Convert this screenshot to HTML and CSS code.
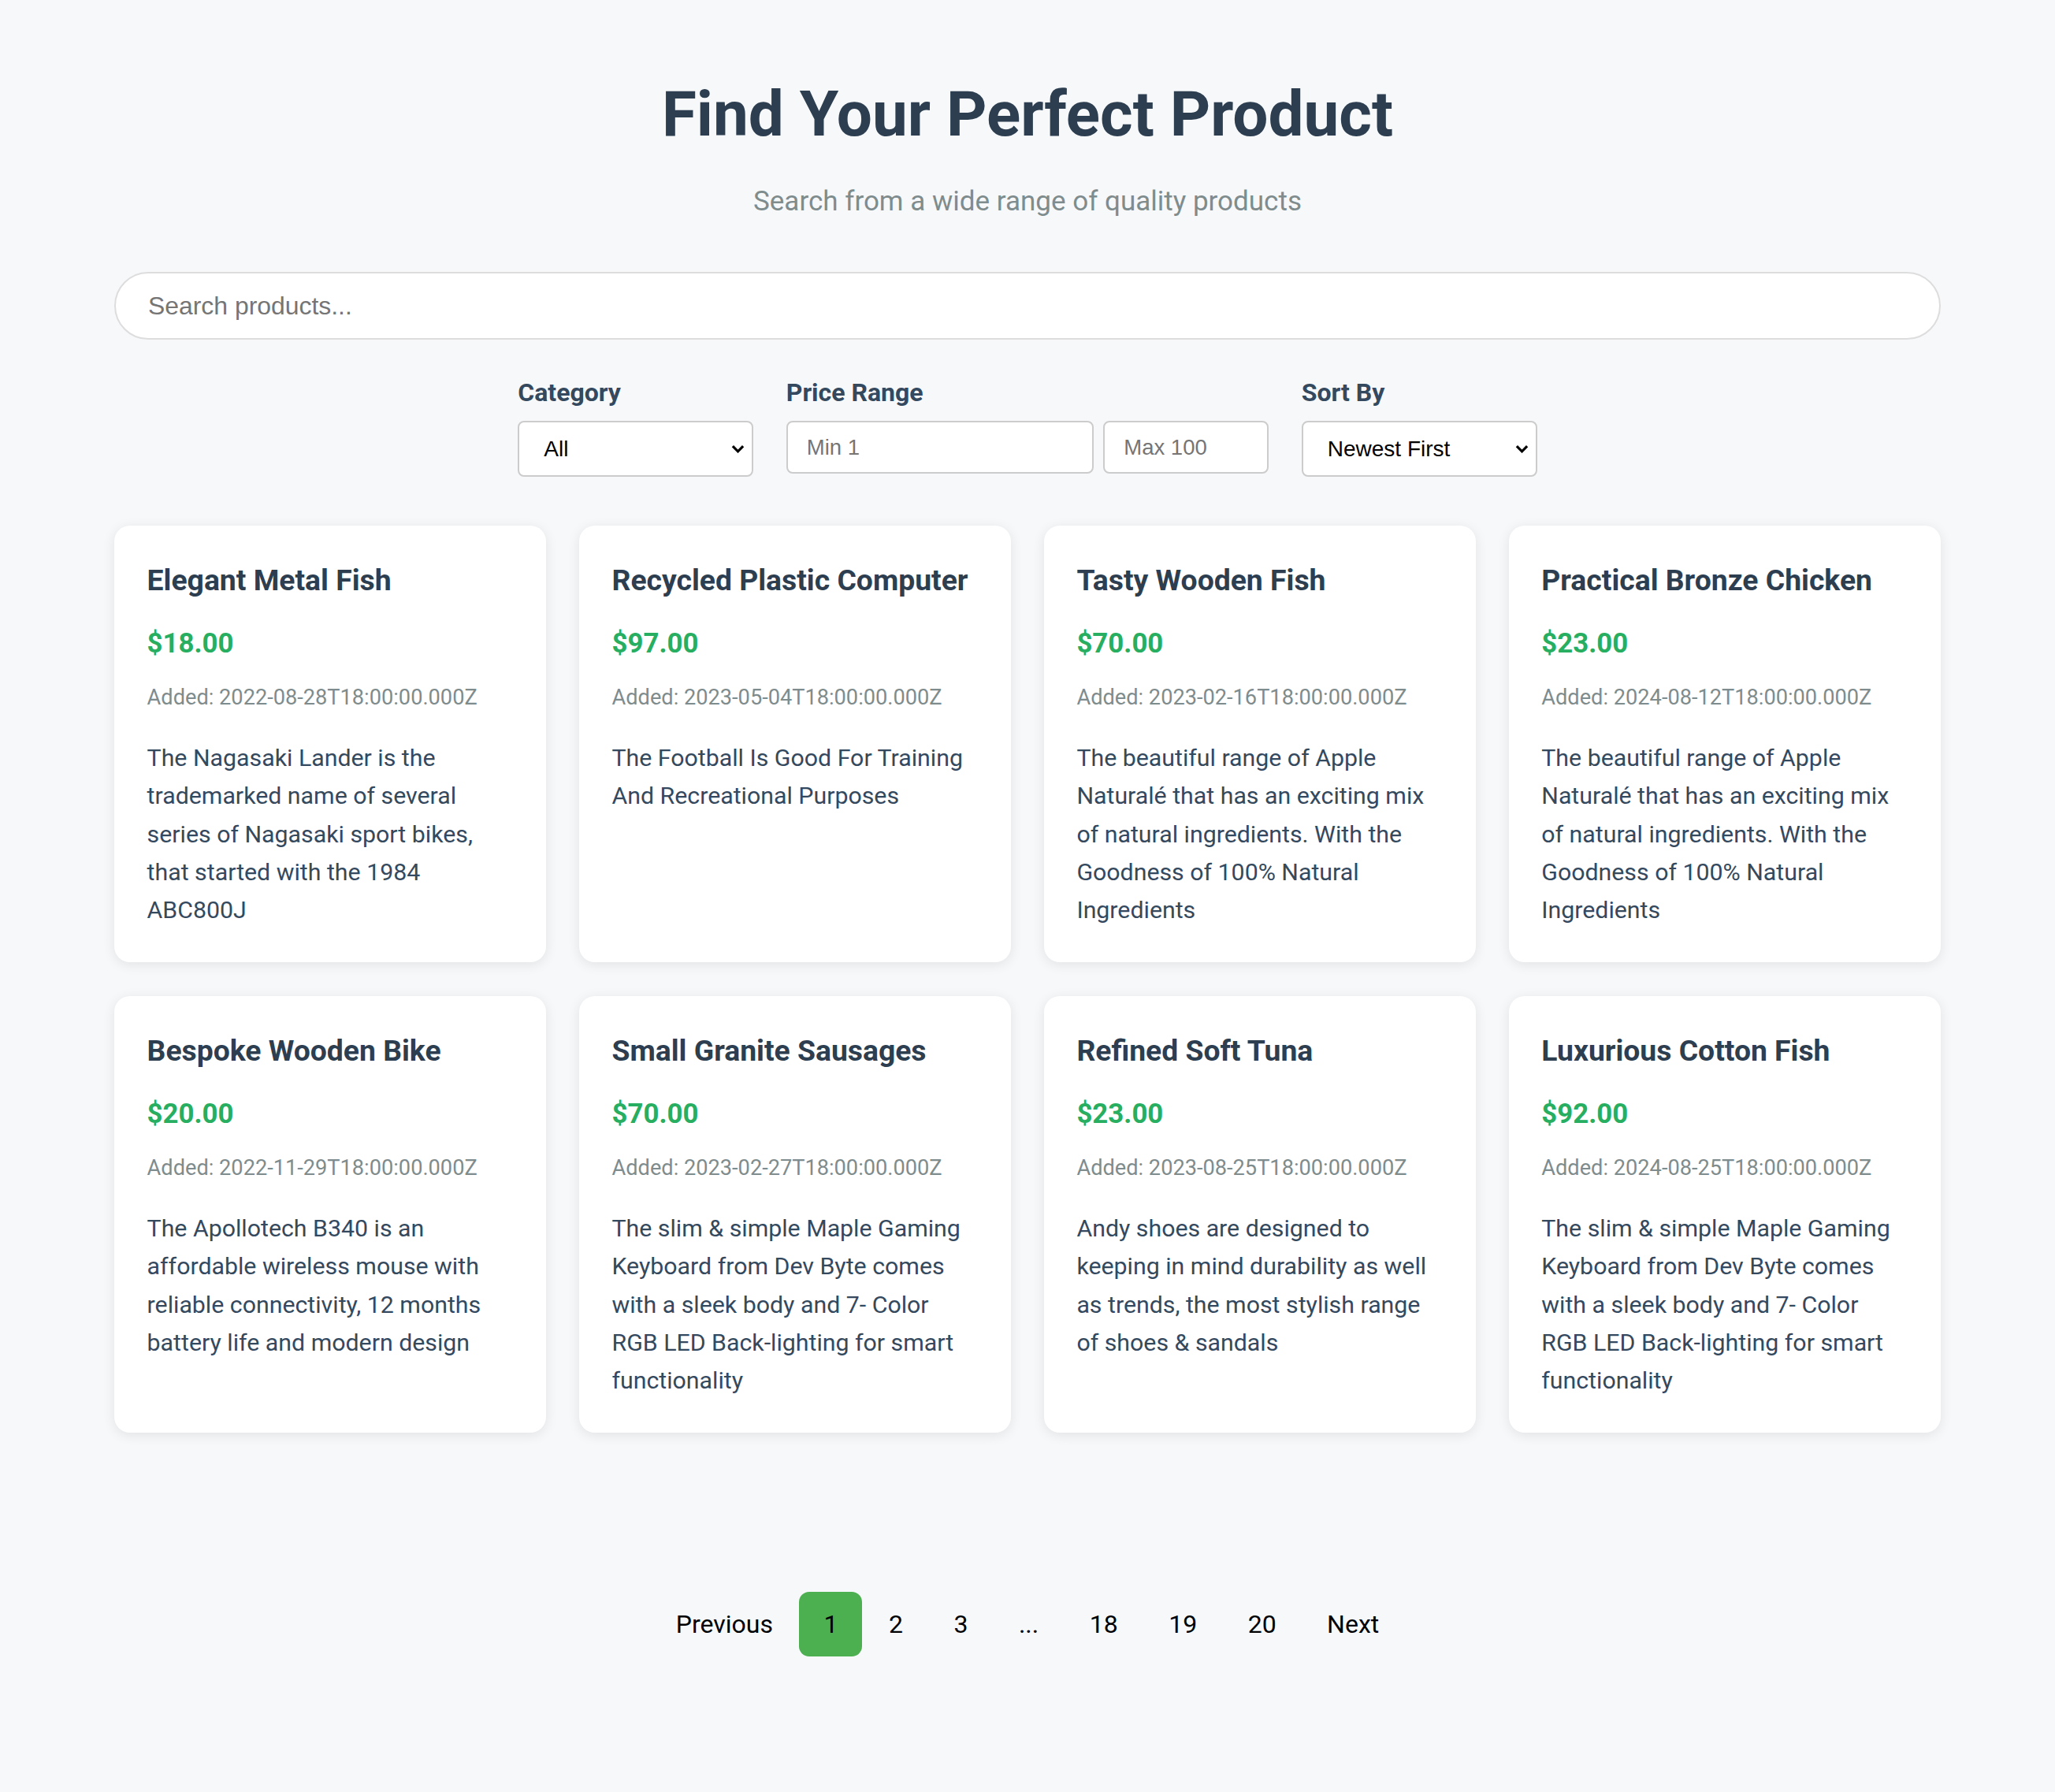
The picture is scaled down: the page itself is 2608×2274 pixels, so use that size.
FILE: index.html
```html
<!DOCTYPE html>
<html lang="en">
<head>
<meta charset="utf-8">
<title>Find Your Perfect Product</title>
<link rel="stylesheet" href="styles.css">
</head>
<body>
<div class="page">
  <header class="hero">
    <h1 class="hero-title">Find Your Perfect Product</h1>
    <p class="hero-sub">Search from a wide range of quality products</p>
  </header>

  <input class="search" type="text" placeholder="Search products...">

  <div class="filters">
    <div class="filter filter-category">
      <label class="filter-label">Category</label>
      <div class="select-wrap">
        <select class="select"><option>All</option></select>
        <svg class="chev" viewBox="0 0 18 11" aria-hidden="true"><path d="M2 2 L9 9 L16 2" fill="none" stroke="#000" stroke-width="3.4"/></svg>
      </div>
    </div>
    <div class="filter filter-price">
      <label class="filter-label">Price Range</label>
      <div class="price-inputs">
        <input class="field field-min" type="text" placeholder="Min 1">
        <input class="field field-max" type="text" placeholder="Max 100">
      </div>
    </div>
    <div class="filter filter-sort">
      <label class="filter-label">Sort By</label>
      <div class="select-wrap">
        <select class="select"><option>Newest First</option></select>
        <svg class="chev" viewBox="0 0 18 11" aria-hidden="true"><path d="M2 2 L9 9 L16 2" fill="none" stroke="#000" stroke-width="3.4"/></svg>
      </div>
    </div>
  </div>

  <div class="grid">
    <article class="card">
      <h3 class="card-title">Elegant Metal Fish</h3>
      <p class="card-price">$18.00</p>
      <p class="card-date">Added: 2022-08-28T18:00:00.000Z</p>
      <p class="card-desc">The Nagasaki Lander is the trademarked name of several series of Nagasaki sport bikes, that started with the 1984 ABC800J</p>
    </article>
    <article class="card">
      <h3 class="card-title">Recycled Plastic Computer</h3>
      <p class="card-price">$97.00</p>
      <p class="card-date">Added: 2023-05-04T18:00:00.000Z</p>
      <p class="card-desc">The Football Is Good For Training And Recreational Purposes</p>
    </article>
    <article class="card">
      <h3 class="card-title">Tasty Wooden Fish</h3>
      <p class="card-price">$70.00</p>
      <p class="card-date">Added: 2023-02-16T18:00:00.000Z</p>
      <p class="card-desc">The beautiful range of Apple Naturalé that has an exciting mix of natural ingredients. With the Goodness of 100% Natural Ingredients</p>
    </article>
    <article class="card">
      <h3 class="card-title">Practical Bronze Chicken</h3>
      <p class="card-price">$23.00</p>
      <p class="card-date">Added: 2024-08-12T18:00:00.000Z</p>
      <p class="card-desc">The beautiful range of Apple Naturalé that has an exciting mix of natural ingredients. With the Goodness of 100% Natural Ingredients</p>
    </article>
    <article class="card">
      <h3 class="card-title">Bespoke Wooden Bike</h3>
      <p class="card-price">$20.00</p>
      <p class="card-date">Added: 2022-11-29T18:00:00.000Z</p>
      <p class="card-desc">The Apollotech B340 is an affordable wireless mouse with reliable connectivity, 12 months battery life and modern design</p>
    </article>
    <article class="card">
      <h3 class="card-title">Small Granite Sausages</h3>
      <p class="card-price">$70.00</p>
      <p class="card-date">Added: 2023-02-27T18:00:00.000Z</p>
      <p class="card-desc">The slim &amp; simple Maple Gaming Keyboard from Dev Byte comes with a sleek body and 7- Color RGB LED Back-lighting for smart functionality</p>
    </article>
    <article class="card">
      <h3 class="card-title">Refined Soft Tuna</h3>
      <p class="card-price">$23.00</p>
      <p class="card-date">Added: 2023-08-25T18:00:00.000Z</p>
      <p class="card-desc">Andy shoes are designed to keeping in mind durability as well as trends, the most stylish range of shoes &amp; sandals</p>
    </article>
    <article class="card">
      <h3 class="card-title">Luxurious Cotton Fish</h3>
      <p class="card-price">$92.00</p>
      <p class="card-date">Added: 2024-08-25T18:00:00.000Z</p>
      <p class="card-desc">The slim &amp; simple Maple Gaming Keyboard from Dev Byte comes with a sleek body and 7- Color RGB LED Back-lighting for smart functionality</p>
    </article>
  </div>

  <nav class="pagination">
    <button class="page-btn">Previous</button>
    <button class="page-btn page-btn-active">1</button>
    <button class="page-btn">2</button>
    <button class="page-btn">3</button>
    <span class="page-btn page-ellipsis">...</span>
    <button class="page-btn">18</button>
    <button class="page-btn">19</button>
    <button class="page-btn">20</button>
    <button class="page-btn">Next</button>
  </nav>
</div>
</body>
</html>
```

FILE: styles.css
```css
html, body {
  margin: 0;
  padding: 0;
  background: #f7f8fa;
}

body {
  font-family: Roboto, "Liberation Sans", Arial, sans-serif;
  color: #2c3e50;
}

.page {
  width: 2318px;
  margin: 0 auto;
  padding: 96px 0 172px;
}

.hero {
  text-align: center;
}

.hero-title {
  margin: 0;
  font-size: 80px;
  line-height: 98px;
  font-weight: 700;
  color: #2c3e50;
}

.hero-sub {
  margin: 42px 0 0;
  font-size: 35px;
  line-height: 39px;
  color: #7f8c8d;
}

.search {
  display: block;
  box-sizing: border-box;
  width: 100%;
  height: 86px;
  margin-top: 70px;
  padding: 0 41px;
  border: 2px solid #dddddd;
  border-radius: 43px;
  background: #fff;
  font-family: "Liberation Sans", Arial, sans-serif;
  font-size: 31.9px;
  color: #333;
  outline: none;
}

.search::placeholder {
  color: #757575;
}

.filters {
  display: flex;
  justify-content: center;
  align-items: flex-start;
  gap: 41.5px;
  margin-top: 50px;
}

.filter {
  display: flex;
  flex-direction: column;
}

.filter-label {
  font-size: 32px;
  line-height: 34px;
  font-weight: 700;
  color: #34495e;
  margin-bottom: 19px;
}

.select-wrap {
  position: relative;
  width: 299px;
}

.select {
  display: block;
  box-sizing: border-box;
  width: 299px;
  height: 71px;
  padding: 0 40px 0 31px;
  border: 2px solid #cccccc;
  border-radius: 8px;
  background: #fff;
  font-family: "Liberation Sans", Arial, sans-serif;
  font-size: 28px;
  color: #000;
  appearance: none;
  -webkit-appearance: none;
  outline: none;
}

.chev {
  position: absolute;
  right: 11px;
  top: 30px;
  width: 17px;
  height: 11px;
  pointer-events: none;
}

.price-inputs {
  display: flex;
  gap: 12.5px;
}

.field {
  box-sizing: border-box;
  height: 67px;
  padding: 0 24px;
  border: 2px solid #cccccc;
  border-radius: 8px;
  background: #fff;
  font-family: "Liberation Sans", Arial, sans-serif;
  font-size: 27.5px;
  color: #333;
  outline: none;
}

.field::placeholder {
  color: #757575;
}

.field-min {
  width: 390px;
}

.field-max {
  width: 210px;
}

.grid {
  display: grid;
  grid-template-columns: repeat(4, 1fr);
  gap: 43px 41.6px;
  margin-top: 62px;
}

.card {
  background: #fff;
  border-radius: 20px;
  padding: 46px 41.6px 41.6px;
  box-shadow: 0 3px 16px rgba(0, 0, 0, 0.09);
}

.card-title {
  margin: 0;
  font-size: 37.3px;
  line-height: 47px;
  font-weight: 700;
  color: #2c3e50;
}

.card-price {
  margin: 37px 0 0;
  font-size: 34.8px;
  line-height: 39px;
  font-weight: 700;
  color: #27ae60;
}

.card-date {
  margin: 34px 0 0;
  font-size: 27.2px;
  line-height: 31px;
  color: #7f8c8d;
}

.card-desc {
  margin: 37px 0 0;
  font-size: 30.3px;
  line-height: 48.3px;
  color: #34495e;
}

.pagination {
  display: flex;
  justify-content: center;
  align-items: center;
  gap: 2.5px;
  margin-top: 202px;
}

.page-btn {
  display: flex;
  align-items: center;
  justify-content: center;
  height: 82px;
  padding: 0 31px;
  border: none;
  border-radius: 13px;
  background: transparent;
  font-family: Roboto, "Liberation Sans", Arial, sans-serif;
  font-size: 32px;
  color: #000;
}

.page-btn-active {
  background: #4caf50;
}
```
